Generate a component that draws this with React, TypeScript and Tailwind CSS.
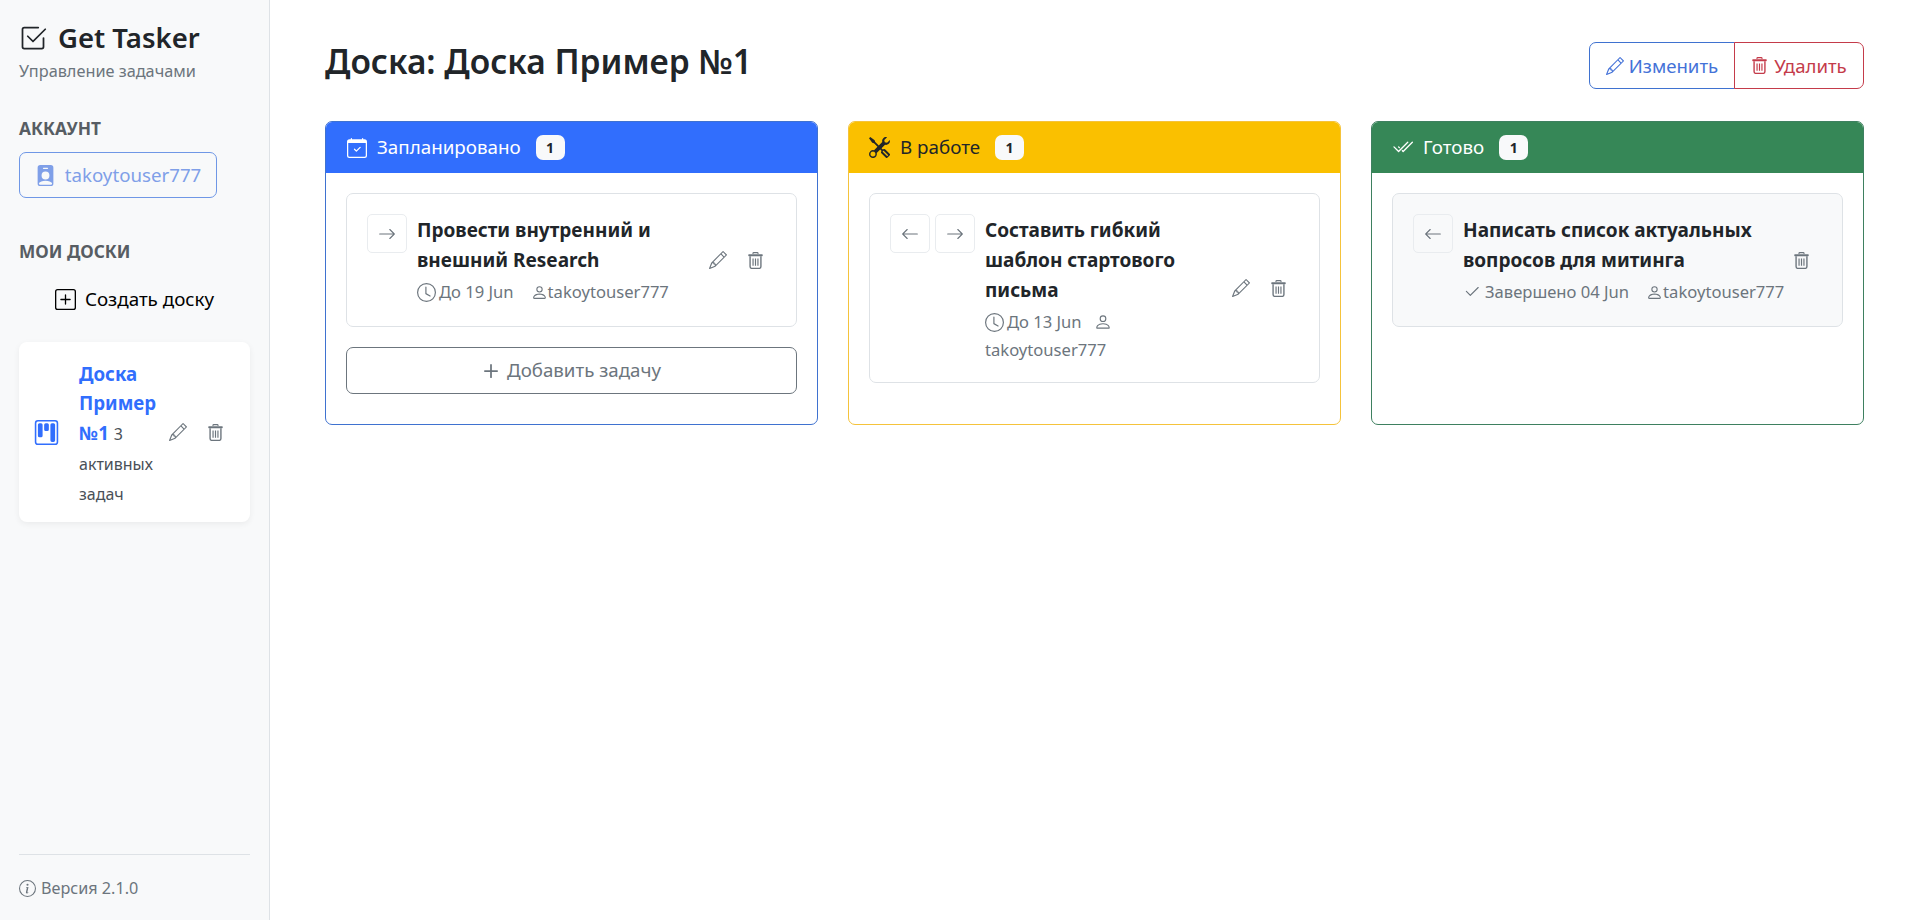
import React from "react";
import {
  BsArrowLeft,
  BsArrowRight,
  BsCalendarCheck,
  BsCheck2,
  BsCheck2All,
  BsCheck2Square,
  BsClock,
  BsInfoCircle,
  BsKanban,
  BsPencil,
  BsPerson,
  BsPersonBadgeFill,
  BsPlus,
  BsPlusSquare,
  BsTools,
} from "react-icons/bs";

// Trash with the heavy lid from the reference
const TrashIcon = ({ size = 17 }: { size?: number }) => (
  <svg width={size} height={size} viewBox="0 0 16 16" fill="none" stroke="currentColor">
    <path d="M5.6 1.9V1.3c0-.4.3-.7.7-.7h3.4c.4 0 .7.3.7.7v.6" strokeWidth="1" />
    <rect x="1.2" y="2" width="13.6" height="2" rx="0.6" fill="currentColor" stroke="none" />
    <path d="M2.9 4v9.6c0 1 .7 1.8 1.7 1.8h6.8c1 0 1.7-.8 1.7-1.8V4" strokeWidth="1.3" />
    <path d="M5.7 6v7M8 6v7M10.3 6v7" strokeWidth="1.1" />
  </svg>
);

const ArrowButton = ({ dir }: { dir: "left" | "right" }) => (
  <button className="flex h-[39px] w-10 shrink-0 items-center justify-center rounded-[5px] border border-[#e9ecef] text-[#6c757d]">
    {dir === "left" ? <BsArrowLeft size={18} /> : <BsArrowRight size={18} />}
  </button>
);

const CardActions = ({ edit = true }: { edit?: boolean }) => (
  <div className="flex shrink-0 items-center gap-[20px] text-[#6c757d]">
    {edit && <BsPencil size={18} />}
    <TrashIcon />
  </div>
);

const Owner = ({ wrap }: { wrap?: boolean }) =>
  wrap ? (
    <>
      <BsPerson size={18} className="ml-[12px] inline-block align-[-3px]" />
      <br />
      takoytouser777
    </>
  ) : (
    <span className="ml-[17px] inline-flex items-center">
      <BsPerson size={17} />
      takoytouser777
    </span>
  );

const Column = ({
  color,
  border,
  text,
  title,
  icon,
  children,
}: {
  color: string;
  border: string;
  text: string;
  title: string;
  icon: React.ReactNode;
  children: React.ReactNode;
}) => (
  <div className={`flex h-[304px] flex-col overflow-hidden rounded-[7px] border ${border}`}>
    <div className={`flex h-[51px] shrink-0 items-center px-5 text-[18.8px] ${color} ${text}`}>
      <span className="mr-[10px] flex w-[21px] justify-center">{icon}</span>
      {title}
      <span className="ml-[15px] flex h-[25px] w-[29px] items-center justify-center rounded-[7px] bg-[#f8f9fa] text-[14px] font-bold text-[#212529]">
        1
      </span>
    </div>
    <div className="flex flex-1 flex-col gap-[20px] p-5">{children}</div>
  </div>
);

export default function App() {
  return (
    <div className="flex h-[920px] font-['Noto_Sans','Open_Sans',sans-serif] text-[#212529]">
      <aside className="flex w-[270px] shrink-0 flex-col border-r border-[#dee2e6] bg-[#f8f9fa] px-[19px] pt-[20px] pb-[17px]">
        <div className="flex items-center gap-[11px] text-[27.5px] leading-[36px] font-semibold">
          <BsCheck2Square size={28} />
          Get Tasker
        </div>
        <div className="mt-[4px] text-[16.3px] leading-[22px] text-[#6c757d]">Управление задачами</div>

        <div className="mt-[35px] text-[17.3px] leading-6 font-bold text-[#575d63]">АККАУНТ</div>
        <button className="mt-[11px] flex h-[46px] w-[198px] items-center justify-center gap-[9px] rounded-[7px] border border-[#6f97e6] text-[18.7px] text-[#7f9fe8]">
          <BsPersonBadgeFill size={21} />
          takoytouser777
        </button>

        <div className="mt-[42px] text-[17.3px] leading-6 font-bold text-[#575d63]">МОИ ДОСКИ</div>
        <button className="mt-[12px] flex h-[46px] items-center justify-center gap-[9px] text-[18.8px] text-black">
          <BsPlusSquare size={21} />
          Создать доску
        </button>

        <div className="mt-[20px] flex h-[180px] items-center rounded-[8px] bg-white pl-[15px] shadow-[0_2px_6px_rgba(0,0,0,0.06)]">
          <BsKanban size={25} className="mr-[20px] shrink-0 text-[#316efd]" />
          <div className="w-[78px] shrink-0 pt-[4px] text-[18.7px] leading-[29.8px]">
            <div className="font-bold text-[#316efd]">Доска</div>
            <div className="font-bold text-[#316efd]">Пример</div>
            <div>
              <span className="font-bold text-[#316efd]">№1</span>{" "}
              <span className="text-[16px] text-[#495057]">3</span>
            </div>
            <div className="text-[16px] text-[#495057]">активных</div>
            <div className="text-[16px] text-[#495057]">задач</div>
          </div>
          <div className="ml-[12px]">
            <CardActions />
          </div>
        </div>

        <div className="mt-auto border-t border-[#dee2e6] pt-[18px]">
          <div className="flex items-center gap-[5px] text-[16.2px] leading-[30px] text-[#6c757d]">
            <BsInfoCircle size={17} />
            Версия 2.1.0
          </div>
        </div>
      </aside>

      <main className="min-w-0 flex-1 bg-white pt-[38px] pr-[53px] pl-[55px]">
        <div className="flex items-start justify-between">
          <h1 className="text-[33.5px] leading-[46px] font-semibold">Доска: Доска Пример №1</h1>
          <div className="mt-[4px] flex h-[47px] text-[18.6px]">
            <button className="flex w-[146px] items-center justify-center gap-[5px] rounded-l-[7px] border border-[#3f72d0] text-[#4472d8]">
              <BsPencil size={18} />
              Изменить
            </button>
            <button className="-ml-px flex w-[130px] items-center justify-center gap-[6px] rounded-r-[7px] border border-[#c43b4a] text-[#c43b4a]">
              <TrashIcon />
              Удалить
            </button>
          </div>
        </div>

        <div className="mt-[32px] grid grid-cols-3 gap-[30px]">
          <Column
            color="bg-[#316efd]"
            border="border-[#3f72d0]"
            text="text-white"
            title="Запланировано"
            icon={<BsCalendarCheck size={20} />}
          >
            <div className="flex h-[134px] items-center rounded-[7px] border border-[#dee2e6] px-5">
              <div className="flex flex-1 items-start gap-[10px] self-start pt-5">
                <ArrowButton dir="right" />
                <div className="min-w-0">
                  <div className="mt-[1px] text-[19px] leading-[30px] font-bold">Провести внутренний и внешний Research</div>
                  <div className="mt-[3px] flex items-center text-[16.6px] leading-[28px] text-[#6c757d]">
                    <BsClock size={19} className="mr-[3px]" />
                    До 19 Jun
                    <Owner />
                  </div>
                </div>
              </div>
              <div className="pr-[12px]">
                <CardActions />
              </div>
            </div>
            <button className="flex h-[47px] items-center justify-center gap-[2px] rounded-[7px] border border-[#6c757d] pr-[5px] text-[18.7px] text-[#6c757d]">
              <BsPlus size={28} />
              Добавить задачу
            </button>
          </Column>

          <Column
            color="bg-[#fac000]"
            border="border-[#f5c33b]"
            text="text-[#212529]"
            title="В работе"
            icon={<BsTools size={21} />}
          >
            <div className="flex h-[190px] items-center rounded-[7px] border border-[#dee2e6] px-5">
              <div className="flex flex-1 items-start gap-[10px] self-start pt-5">
                <div className="flex gap-[5px]">
                  <ArrowButton dir="left" />
                  <ArrowButton dir="right" />
                </div>
                <div className="w-[200px] min-w-0">
                  <div className="mt-[1px] text-[19px] leading-[30px] font-bold">Составить гибкий шаблон стартового письма</div>
                  <div className="mt-[3px] text-[16.6px] leading-[28px] text-[#6c757d]">
                    <BsClock size={19} className="mr-[3px] inline-block align-[-4px]" />
                    До 13 Jun
                    <Owner wrap />
                  </div>
                </div>
              </div>
              <div className="pr-[12px]">
                <CardActions />
              </div>
            </div>
          </Column>

          <Column
            color="bg-[#368757]"
            border="border-[#3e8060]"
            text="text-white"
            title="Готово"
            icon={<BsCheck2All size={21} />}
          >
            <div className="flex h-[134px] items-center rounded-[7px] border border-[#dee2e6] bg-[#f8f9fa] px-5">
              <div className="flex flex-1 items-start gap-[10px] self-start pt-5">
                <ArrowButton dir="left" />
                <div className="min-w-0">
                  <div className="mt-[1px] text-[19px] leading-[30px] font-bold">Написать список актуальных вопросов для митинга</div>
                  <div className="mt-[3px] flex items-center text-[16.6px] leading-[28px] text-[#6c757d]">
                    <BsCheck2 size={18} className="mr-[4px]" />
                    Завершено 04 Jun
                    <Owner />
                  </div>
                </div>
              </div>
              <div className="pr-[12px]">
                <CardActions edit={false} />
              </div>
            </div>
          </Column>
        </div>
      </main>
    </div>
  );
}
